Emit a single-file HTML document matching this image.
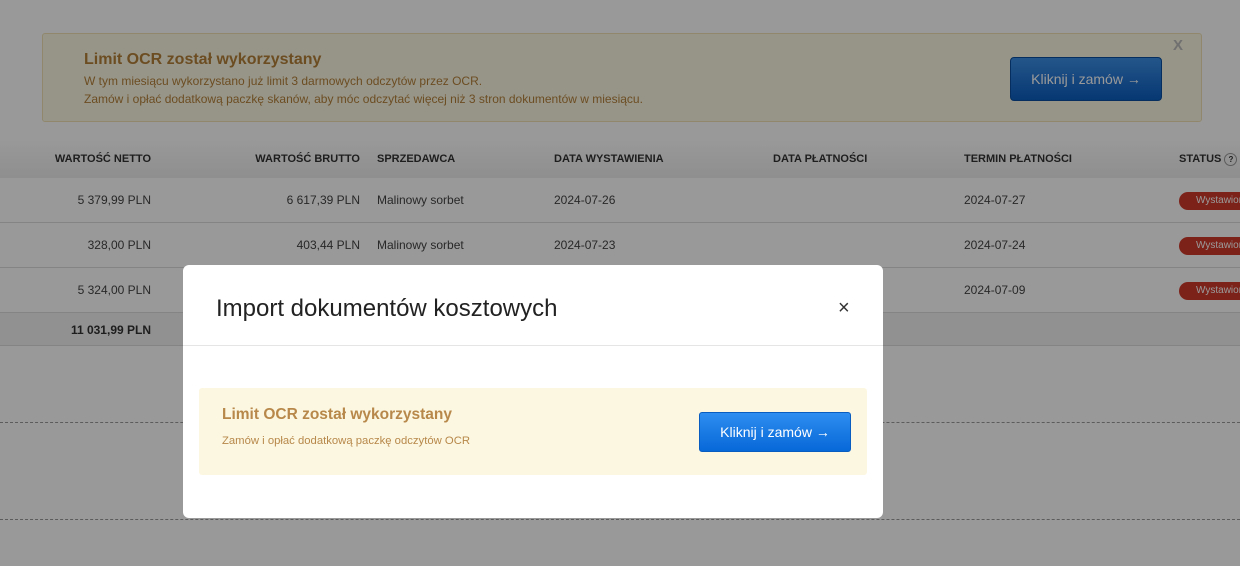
<!DOCTYPE html>
<html><head><meta charset="utf-8"><style>
*{box-sizing:border-box;margin:0;padding:0}
body{width:1240px;height:566px;overflow:hidden;background:#fff;font-family:"Liberation Sans",Arial,sans-serif;position:relative}
.ban{position:absolute;left:42px;top:33px;width:1160px;height:89px;background:#fcf8e3;border:1px solid #f0e2b6;border-radius:3px;color:#c09853}
.ban h3{position:absolute;left:41px;top:17px;font-size:16px;font-weight:bold;color:#b5813a}
.ban p{position:absolute;left:41px;font-size:12px;color:#b5813a}
.bbtn{position:absolute;left:967px;top:23px;width:152px;height:44px;border-radius:4px;background:linear-gradient(#3d8fe6,#0b5dbf);border:1px solid #0a4f9e;color:#fff;font-size:14px;text-align:center;line-height:42px}
.bx{position:absolute;right:18px;top:3px;font-size:15px;font-weight:bold;color:#bbb}
.th{position:absolute;left:0;top:140px;width:1240px;height:38px;background:linear-gradient(#fff,#eee);font-size:11px;font-weight:bold;color:#333}
.c{position:absolute;white-space:nowrap}
.row{position:absolute;left:0;width:1240px;height:45px;border-bottom:1px solid #ddd;font-size:12px;color:#444}
.st{position:absolute;left:1179px;top:14px;width:80px;height:18px;border-radius:9px;background:#d13a2a;color:#fff;font-size:10px;line-height:18px;padding-left:17px}
.dash{position:absolute;left:0;width:1240px;border-top:1px dashed #999}
.ov{position:absolute;inset:0;background:rgba(0,0,0,0.4)}
.m{position:absolute;left:183px;top:265px;width:700px;height:253px;background:#fff;border-radius:6px}
.m h2{position:absolute;left:33px;top:30px;font-size:24px;font-weight:normal;color:#222}
.mx{position:absolute;left:655px;top:32px;font-size:20px;color:#333}
.hr{position:absolute;left:0;top:80px;width:700px;border-top:1px solid #e5e5e5}
.box{position:absolute;left:16px;top:123px;width:668px;height:87px;background:#fcf7e1;border-radius:3px}
.box h4{position:absolute;left:23px;top:18px;font-size:15.5px;color:#b7884a;white-space:nowrap}
.box p{position:absolute;left:23px;top:47px;font-size:11.3px;color:#b7884a;white-space:nowrap}
.mb{position:absolute;left:500px;top:24px;width:152px;height:40px;border-radius:3px;background:linear-gradient(#2e8ef0,#0768d8);border:1px solid #0a5dc0;color:#fff;font-size:14px;text-align:center;line-height:38px}
</style></head><body>
<div class="ban"><h3>Limit OCR został wykorzystany</h3>
<p style="top:40px">W tym miesiącu wykorzystano już limit 3 darmowych odczytów przez OCR.</p>
<p style="top:58px">Zamów i opłać dodatkową paczkę skanów, aby móc odczytać więcej niż 3 stron dokumentów w miesiącu.</p>
<div class="bbtn">Kliknij i zamów →</div><div class="bx">X</div></div>
<div class="th">
<div class="c" style="right:1089px;top:13px">WARTOŚĆ NETTO</div>
<div class="c" style="right:880px;top:13px">WARTOŚĆ BRUTTO</div>
<div class="c" style="left:377px;top:13px">SPRZEDAWCA</div>
<div class="c" style="left:554px;top:13px">DATA WYSTAWIENIA</div>
<div class="c" style="left:773px;top:13px">DATA PŁATNOŚCI</div>
<div class="c" style="left:964px;top:13px">TERMIN PŁATNOŚCI</div>
<div class="c" style="left:1179px;top:13px">STATUS <span style="display:inline-block;width:13px;height:13px;border:1px solid #999;border-radius:50%;font-size:8px;text-align:center;line-height:11px">?</span></div>
</div>
<div class="row" style="top:178px"><div class="c" style="right:1089px;top:15px">5 379,99 PLN</div><div class="c" style="right:880px;top:15px">6 617,39 PLN</div><div class="c" style="left:377px;top:15px">Malinowy sorbet</div><div class="c" style="left:554px;top:15px">2024-07-26</div><div class="c" style="left:964px;top:15px">2024-07-27</div><div class="st">Wystawiona</div></div>
<div class="row" style="top:223px"><div class="c" style="right:1089px;top:15px">328,00 PLN</div><div class="c" style="right:880px;top:15px">403,44 PLN</div><div class="c" style="left:377px;top:15px">Malinowy sorbet</div><div class="c" style="left:554px;top:15px">2024-07-23</div><div class="c" style="left:964px;top:15px">2024-07-24</div><div class="st">Wystawiona</div></div>
<div class="row" style="top:268px"><div class="c" style="right:1089px;top:15px">5 324,00 PLN</div><div class="c" style="left:964px;top:15px">2024-07-09</div><div class="st">Wystawiona</div></div>
<div class="row" style="top:313px;height:33px;background:#f2f2f2;font-weight:bold;color:#333"><div class="c" style="right:1089px;top:10px">11 031,99 PLN</div></div>
<div class="dash" style="top:422px"></div><div class="dash" style="top:519px"></div>
<div class="ov"></div>
<div class="m"><h2>Import dokumentów kosztowych</h2><div class="mx">×</div><div class="hr"></div>
<div class="box"><h4>Limit OCR został wykorzystany</h4><p>Zamów i opłać dodatkową paczkę odczytów OCR</p><div class="mb">Kliknij i zamów →</div></div></div>
</body></html>
